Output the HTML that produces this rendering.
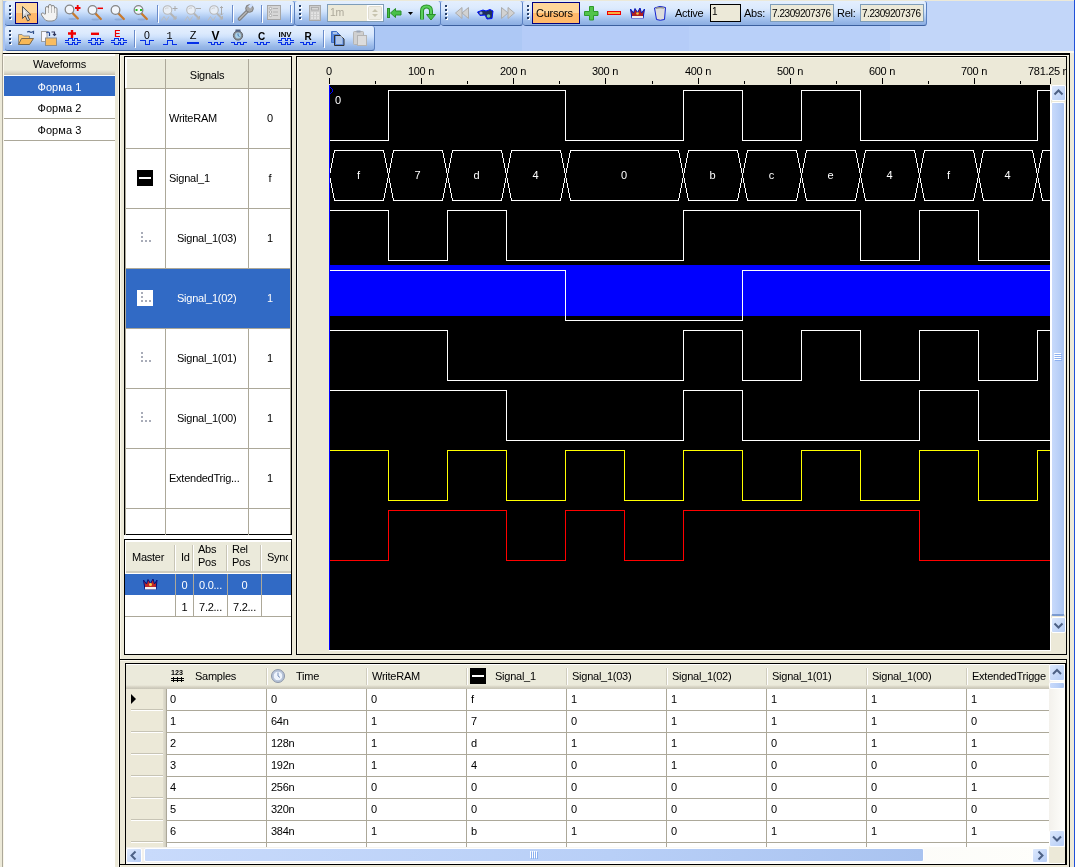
<!DOCTYPE html>
<html><head><meta charset="utf-8"><style>
html,body{margin:0;padding:0;}
body{width:1075px;height:867px;overflow:hidden;position:relative;background:#ECE9D8;font-family:"Liberation Sans",sans-serif;font-size:11px;}
div{position:absolute;box-sizing:border-box;}
.t{white-space:nowrap;line-height:13px;letter-spacing:-0.25px;}
.tb{border-radius:3px;background:linear-gradient(#E4EFFE 0%,#DCEAFD 30%,#CFE2FC 45%,#B2CDF3 65%,#98B8E8 85%,#8CAEE2 100%);border-bottom:1px solid #3B5F9E;border-right:1px solid #5A80C0;}
.selbtn{border:1px solid #000080;background:linear-gradient(#FFD699 0,#FFD699 10px,#FFB96A 10px,#FFB96A 100%);}
.sbtrack{background:linear-gradient(to right,#F3F1EC,#FEFEFB);}
.sbbtn{border-radius:2px;background:linear-gradient(135deg,#DCE8FC,#B6CDF6);border:1px solid #FFFFFF;}
.sbthumb{border-radius:2px;background:linear-gradient(to right,#C8DAFB,#B8CFF7 60%,#A9C3F0);border:1px solid #FFFFFF;}
</style></head><body><div style="left:0;top:0;width:1075px;height:867px;overflow:hidden;will-change:transform;background:#ECE9D8">
<div style="left:3px;top:1px;width:1071px;height:50px;background:linear-gradient(to right,#A6C2F2 0,#A6C2F2 351px,#ADC8F5 351px,#ADC8F5 519px,#B5CCF8 519px,#B5CCF8 686px,#B9D0F9 686px,#B9D0F9 887px,#C2D6F9 887px);"></div>
<div style="left:3px;top:51px;width:1071px;height:2px;background:#FBF8EC;"></div>
<div style="left:3px;top:53px;width:1067px;height:1px;background:#000;"></div>
<div style="left:119px;top:54px;width:951px;height:1px;background:#000;"></div>
<div style="left:1074px;top:0px;width:1px;height:867px;background:#2050D8;"></div>
<div class="tb" style="left:5px;top:1px;width:290px;height:25px"></div>
<div style="left:10px;top:6px;width:2px;height:2px;background:#FFFFFF;"></div>
<div style="left:9px;top:5px;width:2px;height:2px;background:#27416B;"></div>
<div style="left:10px;top:10px;width:2px;height:2px;background:#FFFFFF;"></div>
<div style="left:9px;top:9px;width:2px;height:2px;background:#27416B;"></div>
<div style="left:10px;top:14px;width:2px;height:2px;background:#FFFFFF;"></div>
<div style="left:9px;top:13px;width:2px;height:2px;background:#27416B;"></div>
<div style="left:10px;top:18px;width:2px;height:2px;background:#FFFFFF;"></div>
<div style="left:9px;top:17px;width:2px;height:2px;background:#27416B;"></div>
<div class="tb" style="left:295px;top:1px;width:146px;height:25px"></div>
<div style="left:300px;top:6px;width:2px;height:2px;background:#FFFFFF;"></div>
<div style="left:299px;top:5px;width:2px;height:2px;background:#27416B;"></div>
<div style="left:300px;top:10px;width:2px;height:2px;background:#FFFFFF;"></div>
<div style="left:299px;top:9px;width:2px;height:2px;background:#27416B;"></div>
<div style="left:300px;top:14px;width:2px;height:2px;background:#FFFFFF;"></div>
<div style="left:299px;top:13px;width:2px;height:2px;background:#27416B;"></div>
<div style="left:300px;top:18px;width:2px;height:2px;background:#FFFFFF;"></div>
<div style="left:299px;top:17px;width:2px;height:2px;background:#27416B;"></div>
<div class="tb" style="left:441px;top:1px;width:82px;height:25px"></div>
<div style="left:446px;top:6px;width:2px;height:2px;background:#FFFFFF;"></div>
<div style="left:445px;top:5px;width:2px;height:2px;background:#27416B;"></div>
<div style="left:446px;top:10px;width:2px;height:2px;background:#FFFFFF;"></div>
<div style="left:445px;top:9px;width:2px;height:2px;background:#27416B;"></div>
<div style="left:446px;top:14px;width:2px;height:2px;background:#FFFFFF;"></div>
<div style="left:445px;top:13px;width:2px;height:2px;background:#27416B;"></div>
<div style="left:446px;top:18px;width:2px;height:2px;background:#FFFFFF;"></div>
<div style="left:445px;top:17px;width:2px;height:2px;background:#27416B;"></div>
<div class="tb" style="left:523px;top:1px;width:404px;height:25px"></div>
<div style="left:528px;top:6px;width:2px;height:2px;background:#FFFFFF;"></div>
<div style="left:527px;top:5px;width:2px;height:2px;background:#27416B;"></div>
<div style="left:528px;top:10px;width:2px;height:2px;background:#FFFFFF;"></div>
<div style="left:527px;top:9px;width:2px;height:2px;background:#27416B;"></div>
<div style="left:528px;top:14px;width:2px;height:2px;background:#FFFFFF;"></div>
<div style="left:527px;top:13px;width:2px;height:2px;background:#27416B;"></div>
<div style="left:528px;top:18px;width:2px;height:2px;background:#FFFFFF;"></div>
<div style="left:527px;top:17px;width:2px;height:2px;background:#27416B;"></div>
<div class="tb" style="left:5px;top:26px;width:370px;height:25px"></div>
<div style="left:10px;top:31px;width:2px;height:2px;background:#FFFFFF;"></div>
<div style="left:9px;top:30px;width:2px;height:2px;background:#27416B;"></div>
<div style="left:10px;top:35px;width:2px;height:2px;background:#FFFFFF;"></div>
<div style="left:9px;top:34px;width:2px;height:2px;background:#27416B;"></div>
<div style="left:10px;top:39px;width:2px;height:2px;background:#FFFFFF;"></div>
<div style="left:9px;top:38px;width:2px;height:2px;background:#27416B;"></div>
<div style="left:10px;top:43px;width:2px;height:2px;background:#FFFFFF;"></div>
<div style="left:9px;top:42px;width:2px;height:2px;background:#27416B;"></div>
<div class="selbtn" style="left:15px;top:2px;width:23px;height:22px"></div>
<div class="selbtn" style="left:532px;top:2px;width:48px;height:22px"></div>
<div style="left:2px;top:0px;width:1px;height:53px;background:#D8D4C4;"></div>
<div class="t" style="left:536px;top:7px;color:#000;font-size:11px;">Cursors</div>
<div style="left:157px;top:5px;width:1px;height:17px;background:#6A8CCB;"></div>
<div style="left:158px;top:6px;width:1px;height:17px;background:#FFFFFF;"></div>
<div style="left:232px;top:5px;width:1px;height:17px;background:#6A8CCB;"></div>
<div style="left:233px;top:6px;width:1px;height:17px;background:#FFFFFF;"></div>
<div style="left:261px;top:5px;width:1px;height:17px;background:#6A8CCB;"></div>
<div style="left:262px;top:6px;width:1px;height:17px;background:#FFFFFF;"></div>
<div style="left:290px;top:5px;width:1px;height:17px;background:#6A8CCB;"></div>
<div style="left:291px;top:6px;width:1px;height:17px;background:#FFFFFF;"></div>
<div style="left:134px;top:30px;width:1px;height:17px;background:#6A8CCB;"></div>
<div style="left:135px;top:31px;width:1px;height:17px;background:#FFFFFF;"></div>
<div style="left:323px;top:30px;width:1px;height:17px;background:#6A8CCB;"></div>
<div style="left:324px;top:31px;width:1px;height:17px;background:#FFFFFF;"></div>
<div style="left:327px;top:4px;width:57px;height:18px;background:#7F9DB9;"></div>
<div style="left:328px;top:5px;width:55px;height:16px;background:#ECE9D8;"></div>
<div class="t" style="left:330px;top:6px;color:#ACA899;font-size:10.5px;">1m</div>
<div class="t" style="left:675px;top:7px;color:#000;font-size:11px;">Active</div>
<div style="left:710px;top:4px;width:31px;height:18px;background:#000;"></div>
<div style="left:711px;top:5px;width:29px;height:16px;background:#ECE9D8;"></div>
<div class="t" style="left:712px;top:5px;color:#000;font-size:10px;">1</div>
<div class="t" style="left:744px;top:7px;color:#000;font-size:11px;">Abs:</div>
<div style="left:770px;top:4px;width:64px;height:18px;background:#7F9DB9;"></div>
<div style="left:771px;top:5px;width:62px;height:16px;background:#ECE9D8;"></div>
<div class="t" style="left:772px;top:7px;color:#000;font-size:10px;letter-spacing:-0.45px">7.2309207376</div>
<div class="t" style="left:837px;top:7px;color:#000;font-size:11px;">Rel:</div>
<div style="left:860px;top:4px;width:64px;height:18px;background:#7F9DB9;"></div>
<div style="left:861px;top:5px;width:62px;height:16px;background:#ECE9D8;"></div>
<div class="t" style="left:862px;top:7px;color:#000;font-size:10px;letter-spacing:-0.45px">7.2309207376</div>
<svg style="position:absolute;left:0;top:0" width="1075" height="53" viewBox="0 0 1075 53"><path d="M22.5,6.5 L22.5,18.5 L25.2,15.8 L27.6,21 L29.6,20 L27.3,15 L31,14.8 Z" fill="#D4D4D4" stroke="#505050" stroke-width="1"/><path d="M23.5,9 L23.5,15 L26,12.5 Z" fill="#F4F4F4"/><path d="M45.5,14 L45.5,8 Q45.5,6.5 47,6.5 Q48.5,6.5 48.5,8 L48.5,6 Q48.5,4.5 50,4.5 Q51.5,4.5 51.5,6 L51.5,6.5 Q51.5,5.5 53,5.5 Q54.5,5.5 54.5,7 L54.5,8.5 Q54.5,7.5 55.7,7.5 Q57,7.5 57,9 L57,15.5 Q57,20.5 52,21 L48,21 Q45.5,21 44,18.5 L41.5,15 Q40.8,13.5 42,13 Q43.2,12.6 44.5,14 Z" fill="#F2F2F2" stroke="#8A8A8A" stroke-width="1"/><path d="M48.5,8 L48.5,13 M51.5,6.5 L51.5,13 M54.5,8.5 L54.5,13" stroke="#B0B0B0" stroke-width="0.8" fill="none"/><ellipse cx="72.5" cy="19.0" rx="4" ry="1" fill="#7F9CCB" opacity="0.6"/><line x1="72.5" y1="13.0" x2="77.8" y2="18.5" stroke="#C87A2E" stroke-width="2.3" stroke-linecap="round"/><circle cx="69.5" cy="9.5" r="4.3" fill="#F2F6FC" stroke="#858585" stroke-width="1.3"/><path d="M75,8 L80.5,8 M77.7,5 L77.7,11" stroke="#F00000" stroke-width="1.8"/><ellipse cx="95.5" cy="19.5" rx="4" ry="1" fill="#7F9CCB" opacity="0.6"/><line x1="95.5" y1="13.5" x2="100.8" y2="19" stroke="#C87A2E" stroke-width="2.3" stroke-linecap="round"/><circle cx="92.5" cy="10" r="4.3" fill="#F2F6FC" stroke="#858585" stroke-width="1.3"/><path d="M97.5,8.3 L103,8.3" stroke="#F00000" stroke-width="1.5"/><ellipse cx="118.5" cy="19.5" rx="4" ry="1" fill="#7F9CCB" opacity="0.6"/><line x1="118.5" y1="13.5" x2="123.8" y2="19" stroke="#C87A2E" stroke-width="2.3" stroke-linecap="round"/><circle cx="115.5" cy="10" r="4.3" fill="#F2F6FC" stroke="#858585" stroke-width="1.3"/><ellipse cx="141.5" cy="19.5" rx="4" ry="1" fill="#7F9CCB" opacity="0.6"/><line x1="141.5" y1="13.5" x2="146.8" y2="19" stroke="#C87A2E" stroke-width="2.3" stroke-linecap="round"/><circle cx="138.5" cy="10" r="4.3" fill="#F2F6FC" stroke="#858585" stroke-width="1.3"/><rect x="135.5" y="9" width="2" height="2" fill="#20C020"/><rect x="140" y="9" width="2" height="2" fill="#20C020"/><line x1="170.5" y1="13.5" x2="176.0" y2="19" stroke="#B4B4B4" stroke-width="2"/><path d="M173.0,19 L176.0,19 L176.0,16" fill="none" stroke="#B4B4B4" stroke-width="1"/><circle cx="167.5" cy="10" r="4.3" fill="#E8EEF6" stroke="#B8B8B8" stroke-width="1.1"/><path d="M165.0,9 Q166.5,7.5 168.5,8" stroke="#D0D0D0" stroke-width="1" fill="none"/><path d="M161.5,20.5 L164.0,16.5 L166.5,20.5 L169.0,16.5" fill="none" stroke="#BDBDBD" stroke-width="1"/><path d="M172.5,8.5 L177.5,8.5 M175.0,6 L175.0,11" stroke="#ABABAB" stroke-width="1"/><line x1="194" y1="13.5" x2="199.5" y2="19" stroke="#B4B4B4" stroke-width="2"/><path d="M196.5,19 L199.5,19 L199.5,16" fill="none" stroke="#B4B4B4" stroke-width="1"/><circle cx="191" cy="10" r="4.3" fill="#E8EEF6" stroke="#B8B8B8" stroke-width="1.1"/><path d="M188.5,9 Q190,7.5 192,8" stroke="#D0D0D0" stroke-width="1" fill="none"/><path d="M185,20.5 L187.5,16.5 L190,20.5 L192.5,16.5" fill="none" stroke="#BDBDBD" stroke-width="1"/><path d="M196,8.5 L201,8.5" stroke="#ABABAB" stroke-width="1"/><line x1="217" y1="13.5" x2="222.5" y2="19" stroke="#B4B4B4" stroke-width="2"/><path d="M219.5,19 L222.5,19 L222.5,16" fill="none" stroke="#B4B4B4" stroke-width="1"/><circle cx="214" cy="10" r="4.3" fill="#E8EEF6" stroke="#B8B8B8" stroke-width="1.1"/><path d="M211.5,9 Q213,7.5 215,8" stroke="#D0D0D0" stroke-width="1" fill="none"/><path d="M208,20.5 L210.5,16.5 L213,20.5 L215.5,16.5" fill="none" stroke="#BDBDBD" stroke-width="1"/><path d="M221.5,6.5 L221.5,15 M220,8 L221.5,6.5 L223,8 M220,13.5 L221.5,15 L223,13.5" stroke="#ABABAB" stroke-width="1" fill="none"/><line x1="239.5" y1="19" x2="247.5" y2="11" stroke="#7D7D7D" stroke-width="3.6" stroke-linecap="round"/><line x1="239.5" y1="19" x2="247.5" y2="11" stroke="#B4B4B4" stroke-width="1.6" stroke-linecap="round"/><circle cx="249.5" cy="8.5" r="3.8" fill="#A8A8A8" stroke="#7D7D7D" stroke-width="1"/><rect x="249" y="3.5" width="3" height="4.5" fill="#CFE0FC" transform="rotate(45 250.5 6)"/><rect x="267.5" y="5.5" width="13" height="14" fill="#D6D6D6" stroke="#A6A6A6"/><circle cx="270.5" cy="8.5" r="1.2" fill="#F4F4F4" stroke="#9A9A9A" stroke-width="0.7"/><line x1="273" y1="8.5" x2="278" y2="8.5" stroke="#A8A8A8" stroke-width="0.8"/><circle cx="270.5" cy="12" r="1.2" fill="#F4F4F4" stroke="#9A9A9A" stroke-width="0.7"/><line x1="273" y1="12" x2="278" y2="12" stroke="#A8A8A8" stroke-width="0.8"/><circle cx="270.5" cy="15.5" r="1.2" fill="#F4F4F4" stroke="#9A9A9A" stroke-width="0.7"/><line x1="273" y1="15.5" x2="278" y2="15.5" stroke="#A8A8A8" stroke-width="0.8"/><rect x="309.5" y="5.5" width="11" height="15" fill="#CCCCCC" stroke="#A8A8A8"/><rect x="311.5" y="7.5" width="7" height="2.5" fill="#D8D8D8" stroke="#A8A8A8" stroke-width="0.8"/><rect x="311.3" y="12.3" width="1.5" height="1.5" fill="#F0F0F0"/><rect x="314.3" y="12.3" width="1.5" height="1.5" fill="#F0F0F0"/><rect x="317.3" y="12.3" width="1.5" height="1.5" fill="#F0F0F0"/><rect x="311.3" y="14.8" width="1.5" height="1.5" fill="#F0F0F0"/><rect x="314.3" y="14.8" width="1.5" height="1.5" fill="#F0F0F0"/><rect x="317.3" y="14.8" width="1.5" height="1.5" fill="#F0F0F0"/><rect x="311.3" y="17.3" width="1.5" height="1.5" fill="#F0F0F0"/><rect x="314.3" y="17.3" width="1.5" height="1.5" fill="#F0F0F0"/><rect x="317.3" y="17.3" width="1.5" height="1.5" fill="#F0F0F0"/><rect x="387.5" y="8.5" width="2" height="9" fill="#48C048" stroke="#2A902A" stroke-width="1"/><path d="M390.5,13 L395.5,8.5 L395.5,11 L401,11 L401,15 L395.5,15 L395.5,17.5 Z" fill="#48C048" stroke="#2A902A" stroke-width="1"/><path d="M408,12 L413,12 L410.5,15 Z" fill="#000"/><path d="M422,19.5 L422,11 Q422,6.5 426.5,6.5 Q431,6.5 431,11 L431,15" fill="none" stroke="#2A902A" stroke-width="4"/><path d="M422,19.5 L422,11 Q422,6.5 426.5,6.5 Q431,6.5 431,11 L431,15" fill="none" stroke="#5AD05A" stroke-width="2"/><path d="M426.5,14.5 L435.5,14.5 L431,20 Z" fill="#48C048" stroke="#2A902A" stroke-width="1"/><path d="M455.5,13 L462,7.5 L462,18.5 Z M462,13 L468.5,7.5 L468.5,18.5 Z" fill="#D2D2D2" stroke="#ACACAC" stroke-width="1"/><path d="M514.5,13 L508,7.5 L508,18.5 Z M508,13 L501.5,7.5 L501.5,18.5 Z" fill="#D2D2D2" stroke="#ACACAC" stroke-width="1"/><path d="M477.5,12 L483,10 L486,11 L490,9.5 L493,11 L492,18.5 L487,19 L485,15 L480,15.5 Z" fill="#20305A" stroke="#0010FF" stroke-width="1"/><circle cx="481" cy="13" r="1.6" fill="#90A8D8"/><circle cx="488.5" cy="16" r="1.8" fill="#70C0A0"/><path d="M589.5,6.5 L593.5,6.5 L593.5,11.5 L598,11.5 L598,15.5 L593.5,15.5 L593.5,20 L589.5,20 L589.5,15.5 L584.5,15.5 L584.5,11.5 L589.5,11.5 Z" fill="#52C44A" stroke="#2E9A2A" stroke-width="1"/><rect x="607.5" y="11.5" width="13" height="3" fill="#F8B040" stroke="#F00000" stroke-width="1"/><path d="M630.5,9 L633.5,13 L635,8.5 L637.5,12.5 L640,8 L641.5,13 L644.5,9 L643,18.5 L632,18.5 Z" fill="#B02020" stroke="#0018C0" stroke-width="1"/><rect x="632" y="16" width="11" height="2.5" fill="#F0F0F0"/><circle cx="637.5" cy="13.5" r="1.3" fill="#F0C040"/><path d="M654.5,8 Q660,5 665.5,7.5 L664.5,19.5 Q660,21 656.5,19.5 Z" fill="#DCDCDC" stroke="#1020D0" stroke-width="1"/><path d="M656,8.3 Q660,7 664,8" stroke="#909090" stroke-width="1.5" fill="none"/><path d="M18.5,34.5 L22,34.5 L23.5,36 L29.5,36 L29.5,38.5 L33,38.5 L29.5,44.5 L18.5,44.5 Z" fill="#FCCB78" stroke="#8E8E8E" stroke-width="1"/><path d="M21.5,38.5 L33.5,38.5 L29.5,44.5 L18.5,44.5 Z" fill="#F8B858" stroke="#7A6A50" stroke-width="1"/><path d="M27,32 L29,31.5 L31,32.5 M31,32.5 L33.5,31.5 L33.5,34" stroke="#30508A" stroke-width="1.2" fill="none"/><rect x="41.5" y="31.5" width="5.5" height="10" fill="#F8F8FF" stroke="#A0A0A0" stroke-width="1"/><path d="M46.5,33 Q48,31 49.5,33 L49.5,36" stroke="#20408A" stroke-width="1.2" fill="none"/><path d="M51.5,32 L54.5,32 L54.5,35 M53,34 L54.5,35.5 L56,34" stroke="#303860" stroke-width="1.1" fill="none"/><rect x="45.5" y="38" width="11" height="7.5" fill="#F8BC60" stroke="#8E8E8E" stroke-width="1"/><path d="M64.5,40.5 L68.5,40.5 L68.5,38.5 L72.5,38.5 L72.5,40.5 L74.5,40.5 L74.5,38.5 L77.5,38.5 L77.5,40.5 L80.5,40.5 M64.5,42.5 L68.5,42.5 L68.5,44.5 L72.5,44.5 L72.5,42.5 L74.5,42.5 L74.5,44.5 L77.5,44.5 L77.5,42.5 L80.5,42.5" fill="none" stroke="#0530E8" stroke-width="1" shape-rendering="crispEdges"/><path d="M87.5,40.5 L91.5,40.5 L91.5,38.5 L95.5,38.5 L95.5,40.5 L97.5,40.5 L97.5,38.5 L100.5,38.5 L100.5,40.5 L103.5,40.5 M87.5,42.5 L91.5,42.5 L91.5,44.5 L95.5,44.5 L95.5,42.5 L97.5,42.5 L97.5,44.5 L100.5,44.5 L100.5,42.5 L103.5,42.5" fill="none" stroke="#0530E8" stroke-width="1" shape-rendering="crispEdges"/><path d="M110.5,40.5 L114.5,40.5 L114.5,38.5 L118.5,38.5 L118.5,40.5 L120.5,40.5 L120.5,38.5 L123.5,38.5 L123.5,40.5 L126.5,40.5 M110.5,42.5 L114.5,42.5 L114.5,44.5 L118.5,44.5 L118.5,42.5 L120.5,42.5 L120.5,44.5 L123.5,44.5 L123.5,42.5 L126.5,42.5" fill="none" stroke="#0530E8" stroke-width="1" shape-rendering="crispEdges"/><path d="M68,33.5 L76,33.5 M72,30 L72,38" stroke="#F00000" stroke-width="2.4"/><path d="M91,33.8 L99,33.8" stroke="#F00000" stroke-width="2.4"/><path d="M120,30.5 L115.5,30.5 L115.5,36.5 L120,36.5 M115.5,33.5 L119.5,33.5" stroke="#F00000" stroke-width="1.2" fill="none"/><path d="M140,40.5 L145,40.5 L145,44.5 L149,44.5 L149,40.5 L154,40.5" fill="none" stroke="#0530E8" shape-rendering="crispEdges"/><path d="M163,44.5 L167,44.5 L167,40.5 L172,40.5 L172,44.5 L177,44.5" fill="none" stroke="#0530E8" shape-rendering="crispEdges"/><rect x="187" y="42" width="12" height="2" fill="#0530E8"/><path d="M208,42.5 L211,42.5 L211,44.5 L214,44.5 L214,42.5 L217,42.5 L217,44.5 L220,44.5 L220,42.5 L224,42.5" fill="none" stroke="#0530E8" stroke-width="1" shape-rendering="crispEdges"/><path d="M231,42.5 L234,42.5 L234,44.5 L237,44.5 L237,42.5 L240,42.5 L240,44.5 L243,44.5 L243,42.5 L247,42.5" fill="none" stroke="#0530E8" stroke-width="1" shape-rendering="crispEdges"/><path d="M254,42.5 L257,42.5 L257,44.5 L260,44.5 L260,42.5 L263,42.5 L263,44.5 L266,44.5 L266,42.5 L270,42.5" fill="none" stroke="#0530E8" stroke-width="1" shape-rendering="crispEdges"/><path d="M300,42.5 L303,42.5 L303,44.5 L306,44.5 L306,42.5 L309,42.5 L309,44.5 L312,44.5 L312,42.5 L316,42.5" fill="none" stroke="#0530E8" stroke-width="1" shape-rendering="crispEdges"/><path d="M277.5,40.5 L281.5,40.5 L281.5,38.5 L285.5,38.5 L285.5,40.5 L287.5,40.5 L287.5,38.5 L290.5,38.5 L290.5,40.5 L293.5,40.5 M277.5,42.5 L281.5,42.5 L281.5,44.5 L285.5,44.5 L285.5,42.5 L287.5,42.5 L287.5,44.5 L290.5,44.5 L290.5,42.5 L293.5,42.5" fill="none" stroke="#0530E8" stroke-width="1" shape-rendering="crispEdges"/><text x="147" y="38.5" font-size="10.5" font-family="Liberation Sans" text-anchor="middle" fill="#000">0</text><text x="169.5" y="38.5" font-size="10" font-family="Liberation Mono" text-anchor="middle" fill="#000">1</text><text x="193" y="39" font-size="11" font-family="Liberation Sans" text-anchor="middle" fill="#000">Z</text><text x="215.5" y="39.5" font-size="12" font-weight="bold" font-family="Liberation Sans" text-anchor="middle" fill="#000">V</text><circle cx="238" cy="35.5" r="4.6" fill="#8A9098" stroke="#5A6068"/><circle cx="238" cy="35.5" r="2.9" fill="#A8D0E8"/><path d="M238,33.5 L238,35.5 L239.5,36.5" stroke="#3060A0" stroke-width="0.8" fill="none"/><rect x="235.5" y="29.5" width="5" height="2" fill="#506080"/><text x="261.5" y="39.5" font-size="10" font-weight="bold" font-family="Liberation Sans" text-anchor="middle" fill="#000">C</text><text x="285" y="37.3" font-size="8" font-weight="bold" font-family="Liberation Sans" text-anchor="middle" fill="#000" textLength="13" lengthAdjust="spacingAndGlyphs">INV</text><text x="308" y="39.5" font-size="10" font-weight="bold" font-family="Liberation Sans" text-anchor="middle" fill="#000">R</text><path d="M331.5,31.5 L336.5,31.5 L340,35 L340,42.5 L331.5,42.5 Z" fill="#5A8AE0" stroke="#4070C8" stroke-width="1"/><path d="M334.5,35.5 L340.5,35.5 L344,39 L344,45.5 L334.5,45.5 Z" fill="#5A8AE0" stroke="#303030" stroke-width="1"/><line x1="333" y1="33" x2="337" y2="33" stroke="#FFFFF0" stroke-width="1"/><line x1="336" y1="37" x2="342.5" y2="37" stroke="#FFFFF0" stroke-width="1"/><line x1="336" y1="39" x2="342.5" y2="39" stroke="#FFFFF0" stroke-width="1"/><line x1="336" y1="41" x2="342.5" y2="41" stroke="#FFFFF0" stroke-width="1"/><line x1="336" y1="43" x2="342.5" y2="43" stroke="#FFFFF0" stroke-width="1"/><rect x="353.5" y="31.5" width="10" height="13" rx="1" fill="#D0D0D0" stroke="#B4B4B4"/><rect x="356.5" y="30.5" width="4" height="2" fill="#9AA4B4"/><rect x="357.5" y="35.5" width="9" height="10" fill="#DCDCDC" stroke="#B4B4B4"/></svg>
<svg style="position:absolute;left:367px;top:5px" width="16" height="16"><rect x="0" y="0" width="16" height="16" fill="#FFFFFF"/><rect x="1.5" y="1.5" width="13" height="13" rx="1" fill="#EFEDE4" stroke="#E0DDD0"/><path d="M5,7 L8,4 L11,7 Z M5,9 L8,12 L11,9 Z" fill="#C8C4B0"/></svg>
<div style="left:2px;top:53px;width:1px;height:814px;background:#ACA899;"></div>
<div style="left:3px;top:54px;width:1px;height:813px;background:#FBF8EC;"></div>
<div style="left:4px;top:54px;width:111px;height:813px;background:#FFFFFF;"></div>
<div style="left:115px;top:54px;width:4px;height:813px;background:#ECE9D8;"></div>
<div style="left:118px;top:54px;width:1px;height:813px;background:#FBF8EC;"></div>
<div style="left:119px;top:53px;width:1px;height:814px;background:#000;"></div>
<div style="left:4px;top:55px;width:111px;height:20px;background:linear-gradient(#FFFFFF 0,#FFFFFF 1px,#EBEADB 1px,#EBEADB 15px,#D8D5C6 18px,#C4C1B2 20px);"></div>
<div class="t" style="left:4px;top:58px;color:#000;font-size:11px;width:111px;text-align:center;">Waveforms</div>
<div style="left:4px;top:76px;width:111px;height:20px;background:#316AC5;"></div>
<div class="t" style="left:4px;top:81px;color:#FFF;font-size:11px;width:111px;text-align:center;letter-spacing:0.1px">Форма 1</div>
<div class="t" style="left:4px;top:102px;color:#000;font-size:11px;width:111px;text-align:center;letter-spacing:0.1px">Форма 2</div>
<div style="left:4px;top:118px;width:111px;height:1px;background:#ACA899;"></div>
<div class="t" style="left:4px;top:124px;color:#000;font-size:11px;width:111px;text-align:center;letter-spacing:0.1px">Форма 3</div>
<div style="left:4px;top:140px;width:111px;height:1px;background:#ACA899;"></div>
<div style="left:120px;top:55px;width:949px;height:812px;background:#ECE9D8;"></div>
<div style="left:120px;top:55px;width:949px;height:1px;background:#FBF8EC;"></div>
<div style="left:120px;top:55px;width:1px;height:812px;background:#FBF8EC;"></div>
<div style="left:1069px;top:53px;width:1px;height:814px;background:#000;"></div>
<div style="left:124px;top:56px;width:168px;height:479px;background:#000;"></div>
<div style="left:125px;top:57px;width:166px;height:477px;background:#FFFFFF;"></div>
<div style="left:127px;top:59px;width:164px;height:29px;background:#EBEADB;"></div>
<div style="left:125px;top:88px;width:166px;height:1px;background:#ACA899;"></div>
<div style="left:165px;top:59px;width:1px;height:476px;background:#ACA899;"></div>
<div style="left:248px;top:59px;width:1px;height:476px;background:#ACA899;"></div>
<div class="t" style="left:166px;top:69px;color:#000;font-size:11px;width:82px;text-align:center;">Signals</div>
<div class="t" style="left:169px;top:112px;color:#000;font-size:11px;">WriteRAM</div>
<div class="t" style="left:249px;top:112px;color:#000;font-size:11px;width:42px;text-align:center;">0</div>
<div style="left:125px;top:148px;width:166px;height:1px;background:#ACA899;"></div>
<div class="t" style="left:169px;top:172px;color:#000;font-size:11px;">Signal_1</div>
<div class="t" style="left:249px;top:172px;color:#000;font-size:11px;width:42px;text-align:center;">f</div>
<div style="left:125px;top:208px;width:166px;height:1px;background:#ACA899;"></div>
<div style="left:137px;top:170px;width:16px;height:16px;background:#000;"></div>
<div style="left:139px;top:177px;width:12px;height:2px;background:#FFF;"></div>
<div class="t" style="left:177px;top:232px;color:#000;font-size:11px;">Signal_1(03)</div>
<div class="t" style="left:249px;top:232px;color:#000;font-size:11px;width:42px;text-align:center;">1</div>
<div style="left:125px;top:268px;width:166px;height:1px;background:#ACA899;"></div>
<div style="left:141px;top:232px;width:2px;height:2px;background:#A8ACB8;"></div>
<div style="left:141px;top:236px;width:2px;height:2px;background:#A8ACB8;"></div>
<div style="left:141px;top:240px;width:2px;height:2px;background:#A8ACB8;"></div>
<div style="left:145px;top:240px;width:2px;height:2px;background:#A8ACB8;"></div>
<div style="left:149px;top:240px;width:2px;height:2px;background:#A8ACB8;"></div>
<div style="left:125px;top:269px;width:166px;height:59px;background:#316AC5;"></div>
<div class="t" style="left:177px;top:292px;color:#FFF;font-size:11px;">Signal_1(02)</div>
<div class="t" style="left:249px;top:292px;color:#FFF;font-size:11px;width:42px;text-align:center;">1</div>
<div style="left:125px;top:328px;width:166px;height:1px;background:#ACA899;"></div>
<div style="left:137px;top:290px;width:16px;height:16px;background:#FFF;"></div>
<div style="left:141px;top:292px;width:2px;height:2px;background:#A8ACB8;"></div>
<div style="left:141px;top:296px;width:2px;height:2px;background:#A8ACB8;"></div>
<div style="left:141px;top:300px;width:2px;height:2px;background:#A8ACB8;"></div>
<div style="left:145px;top:300px;width:2px;height:2px;background:#A8ACB8;"></div>
<div style="left:149px;top:300px;width:2px;height:2px;background:#A8ACB8;"></div>
<div class="t" style="left:177px;top:352px;color:#000;font-size:11px;">Signal_1(01)</div>
<div class="t" style="left:249px;top:352px;color:#000;font-size:11px;width:42px;text-align:center;">1</div>
<div style="left:125px;top:388px;width:166px;height:1px;background:#ACA899;"></div>
<div style="left:141px;top:352px;width:2px;height:2px;background:#A8ACB8;"></div>
<div style="left:141px;top:356px;width:2px;height:2px;background:#A8ACB8;"></div>
<div style="left:141px;top:360px;width:2px;height:2px;background:#A8ACB8;"></div>
<div style="left:145px;top:360px;width:2px;height:2px;background:#A8ACB8;"></div>
<div style="left:149px;top:360px;width:2px;height:2px;background:#A8ACB8;"></div>
<div class="t" style="left:177px;top:412px;color:#000;font-size:11px;">Signal_1(00)</div>
<div class="t" style="left:249px;top:412px;color:#000;font-size:11px;width:42px;text-align:center;">1</div>
<div style="left:125px;top:448px;width:166px;height:1px;background:#ACA899;"></div>
<div style="left:141px;top:412px;width:2px;height:2px;background:#A8ACB8;"></div>
<div style="left:141px;top:416px;width:2px;height:2px;background:#A8ACB8;"></div>
<div style="left:141px;top:420px;width:2px;height:2px;background:#A8ACB8;"></div>
<div style="left:145px;top:420px;width:2px;height:2px;background:#A8ACB8;"></div>
<div style="left:149px;top:420px;width:2px;height:2px;background:#A8ACB8;"></div>
<div class="t" style="left:169px;top:472px;color:#000;font-size:11px;">ExtendedTrig...</div>
<div class="t" style="left:249px;top:472px;color:#000;font-size:11px;width:42px;text-align:center;">1</div>
<div style="left:125px;top:508px;width:166px;height:1px;background:#ACA899;"></div>
<div style="left:125px;top:89px;width:1px;height:446px;background:#ACA899;"></div>
<div style="left:290px;top:89px;width:1px;height:445px;background:#ACA899;"></div>
<div style="left:166px;top:89px;width:0px;height:0px;background:#000;"></div>
<div style="left:124px;top:535px;width:168px;height:4px;background:#FFFFFF;"></div>
<div style="left:124px;top:539px;width:168px;height:116px;background:#000;"></div>
<div style="left:125px;top:540px;width:166px;height:114px;background:#FFFFFF;"></div>
<div style="left:126px;top:542px;width:165px;height:31px;background:#EBEADB;"></div>
<div style="left:126px;top:571px;width:165px;height:2px;background:#D0CDBE;"></div>
<div style="left:174px;top:545px;width:1px;height:26px;background:#C8C5B6;"></div>
<div style="left:175px;top:545px;width:1px;height:26px;background:#FFFFFF;"></div>
<div style="left:192px;top:545px;width:1px;height:26px;background:#C8C5B6;"></div>
<div style="left:193px;top:545px;width:1px;height:26px;background:#FFFFFF;"></div>
<div style="left:226px;top:545px;width:1px;height:26px;background:#C8C5B6;"></div>
<div style="left:227px;top:545px;width:1px;height:26px;background:#FFFFFF;"></div>
<div style="left:260px;top:545px;width:1px;height:26px;background:#C8C5B6;"></div>
<div style="left:261px;top:545px;width:1px;height:26px;background:#FFFFFF;"></div>
<div class="t" style="left:132px;top:551px;color:#000;font-size:11px;">Master</div>
<div class="t" style="left:181px;top:551px;color:#000;font-size:11px;">Id</div>
<div class="t" style="left:198px;top:543px;color:#000;font-size:11px;line-height:13px">Abs<br>Pos</div>
<div class="t" style="left:232px;top:543px;color:#000;font-size:11px;line-height:13px">Rel<br>Pos</div>
<div class="t" style="left:267px;top:551px;color:#000;font-size:11px;width:21px;overflow:hidden">Sync</div>
<div style="left:125px;top:574px;width:166px;height:21px;background:#316AC5;"></div>
<div style="left:175px;top:574px;width:1px;height:43px;background:#ACA899;"></div>
<div style="left:193px;top:574px;width:1px;height:43px;background:#ACA899;"></div>
<div style="left:227px;top:574px;width:1px;height:43px;background:#ACA899;"></div>
<div style="left:261px;top:574px;width:1px;height:43px;background:#ACA899;"></div>
<div style="left:125px;top:616px;width:166px;height:1px;background:#ACA899;"></div>
<div class="t" style="left:176px;top:579px;color:#FFF;font-size:11px;width:17px;text-align:center;">0</div>
<svg style="position:absolute;left:142px;top:577px" width="16" height="14"><path d="M1.5,3 L4.5,7 L6,2.5 L8.5,6.5 L11,2 L12.5,7 L15,3 L14,12.5 L3,12.5 Z" fill="#C02828" stroke="#001080" stroke-width="1"/><rect x="3" y="10" width="11" height="2.5" fill="#F4F4F4"/><circle cx="8.5" cy="7.5" r="1.5" fill="#F8D048"/></svg>
<div class="t" style="left:194px;top:579px;color:#FFF;font-size:11px;width:33px;text-align:center;">0.0...</div>
<div class="t" style="left:228px;top:579px;color:#FFF;font-size:11px;width:33px;text-align:center;">0</div>
<div class="t" style="left:176px;top:601px;color:#000;font-size:11px;width:17px;text-align:center;">1</div>
<div class="t" style="left:194px;top:601px;color:#000;font-size:11px;width:33px;text-align:center;">7.2...</div>
<div class="t" style="left:228px;top:601px;color:#000;font-size:11px;width:33px;text-align:center;">7.2...</div>
<div style="left:296px;top:56px;width:771px;height:599px;background:#000;"></div>
<div style="left:297px;top:57px;width:769px;height:597px;background:#ECE9D8;"></div>
<div style="left:297px;top:57px;width:769px;height:1px;background:#FBF8EC;"></div>
<div style="left:297px;top:57px;width:1px;height:597px;background:#FBF8EC;"></div>
<div class="t" style="left:289px;top:65px;color:#000;font-size:11px;width:80px;text-align:center;letter-spacing:-0.3px">0</div>
<div class="t" style="left:381px;top:65px;color:#000;font-size:11px;width:80px;text-align:center;letter-spacing:-0.3px">100 n</div>
<div class="t" style="left:473px;top:65px;color:#000;font-size:11px;width:80px;text-align:center;letter-spacing:-0.3px">200 n</div>
<div class="t" style="left:565px;top:65px;color:#000;font-size:11px;width:80px;text-align:center;letter-spacing:-0.3px">300 n</div>
<div class="t" style="left:658px;top:65px;color:#000;font-size:11px;width:80px;text-align:center;letter-spacing:-0.3px">400 n</div>
<div class="t" style="left:750px;top:65px;color:#000;font-size:11px;width:80px;text-align:center;letter-spacing:-0.3px">500 n</div>
<div class="t" style="left:842px;top:65px;color:#000;font-size:11px;width:80px;text-align:center;letter-spacing:-0.3px">600 n</div>
<div class="t" style="left:934px;top:65px;color:#000;font-size:11px;width:80px;text-align:center;letter-spacing:-0.3px">700 n</div>
<div class="t" style="left:1028px;top:65px;color:#000;font-size:11px;width:38px;overflow:hidden;white-space:nowrap;letter-spacing:-0.3px">781.25 n</div>
<div style="left:329px;top:78px;width:1px;height:6px;background:#000;"></div>
<div style="left:375px;top:81px;width:1px;height:3px;background:#000;"></div>
<div style="left:421px;top:78px;width:1px;height:6px;background:#000;"></div>
<div style="left:467px;top:81px;width:1px;height:3px;background:#000;"></div>
<div style="left:513px;top:78px;width:1px;height:6px;background:#000;"></div>
<div style="left:559px;top:81px;width:1px;height:3px;background:#000;"></div>
<div style="left:605px;top:78px;width:1px;height:6px;background:#000;"></div>
<div style="left:652px;top:81px;width:1px;height:3px;background:#000;"></div>
<div style="left:698px;top:78px;width:1px;height:6px;background:#000;"></div>
<div style="left:744px;top:81px;width:1px;height:3px;background:#000;"></div>
<div style="left:790px;top:78px;width:1px;height:6px;background:#000;"></div>
<div style="left:836px;top:81px;width:1px;height:3px;background:#000;"></div>
<div style="left:882px;top:78px;width:1px;height:6px;background:#000;"></div>
<div style="left:928px;top:81px;width:1px;height:3px;background:#000;"></div>
<div style="left:974px;top:78px;width:1px;height:6px;background:#000;"></div>
<div style="left:1020px;top:81px;width:1px;height:3px;background:#000;"></div>
<div style="left:1050px;top:78px;width:1px;height:6px;background:#000;"></div>
<svg width="722" height="566" viewBox="329 85 722 566" style="position:absolute;left:329px;top:85px" shape-rendering="crispEdges"><rect x="329" y="85" width="721" height="565" fill="#000"/><rect x="329" y="265" width="721" height="51" fill="#0000FF"/><polyline fill="none" stroke="#FFF" stroke-width="1" points="329.5,140.5 388.5,140.5 388.5,90.5 565.5,90.5 565.5,140.5 683.5,140.5 683.5,90.5 742.5,90.5 742.5,140.5 801.5,140.5 801.5,90.5 860.5,90.5 860.5,140.5 1037.5,140.5 1037.5,90.5 1051,90.5"/><polyline fill="none" stroke="#FFF" stroke-width="1" points="329.5,210.5 388.5,210.5 388.5,260.5 447.5,260.5 447.5,210.5 506.5,210.5 506.5,260.5 683.5,260.5 683.5,210.5 860.5,210.5 860.5,260.5 919.5,260.5 919.5,210.5 978.5,210.5 978.5,260.5 1051,260.5"/><polyline fill="none" stroke="#FFF" stroke-width="1" points="329.5,270.5 565.5,270.5 565.5,320.5 742.5,320.5 742.5,270.5 1051,270.5"/><polyline fill="none" stroke="#FFF" stroke-width="1" points="329.5,330.5 447.5,330.5 447.5,380.5 683.5,380.5 683.5,330.5 742.5,330.5 742.5,380.5 801.5,380.5 801.5,330.5 860.5,330.5 860.5,380.5 919.5,380.5 919.5,330.5 978.5,330.5 978.5,380.5 1037.5,380.5 1037.5,330.5 1051,330.5"/><polyline fill="none" stroke="#FFF" stroke-width="1" points="329.5,390.5 506.5,390.5 506.5,440.5 683.5,440.5 683.5,390.5 742.5,390.5 742.5,440.5 919.5,440.5 919.5,390.5 978.5,390.5 978.5,440.5 1051,440.5"/><polyline fill="none" stroke="#FFFF00" stroke-width="1" points="329.5,450.5 388.5,450.5 388.5,500.5 447.5,500.5 447.5,450.5 506.5,450.5 506.5,500.5 565.5,500.5 565.5,450.5 624.5,450.5 624.5,500.5 683.5,500.5 683.5,450.5 742.5,450.5 742.5,500.5 801.5,500.5 801.5,450.5 860.5,450.5 860.5,500.5 919.5,500.5 919.5,450.5 978.5,450.5 978.5,500.5 1037.5,500.5 1037.5,450.5 1051,450.5"/><polyline fill="none" stroke="#FF0000" stroke-width="1" points="329.5,560.5 388.5,560.5 388.5,510.5 506.5,510.5 506.5,560.5 565.5,560.5 565.5,510.5 624.5,510.5 624.5,560.5 683.5,560.5 683.5,510.5 919.5,510.5 919.5,560.5 1051,560.5"/><path d="M334.5,150.5 L383.5,150.5 L388.5,175.5 L383.5,200.5 L334.5,200.5 L329.5,175.5 Z" fill="none" stroke="#FFF" stroke-width="1"/><text x="358.5" y="179" fill="#FFF" font-size="11" text-anchor="middle" font-family="Liberation Sans">f</text><path d="M393.5,150.5 L442.5,150.5 L447.5,175.5 L442.5,200.5 L393.5,200.5 L388.5,175.5 Z" fill="none" stroke="#FFF" stroke-width="1"/><text x="417.5" y="179" fill="#FFF" font-size="11" text-anchor="middle" font-family="Liberation Sans">7</text><path d="M452.5,150.5 L501.5,150.5 L506.5,175.5 L501.5,200.5 L452.5,200.5 L447.5,175.5 Z" fill="none" stroke="#FFF" stroke-width="1"/><text x="476.5" y="179" fill="#FFF" font-size="11" text-anchor="middle" font-family="Liberation Sans">d</text><path d="M511.5,150.5 L560.5,150.5 L565.5,175.5 L560.5,200.5 L511.5,200.5 L506.5,175.5 Z" fill="none" stroke="#FFF" stroke-width="1"/><text x="535.5" y="179" fill="#FFF" font-size="11" text-anchor="middle" font-family="Liberation Sans">4</text><path d="M570.5,150.5 L678.5,150.5 L683.5,175.5 L678.5,200.5 L570.5,200.5 L565.5,175.5 Z" fill="none" stroke="#FFF" stroke-width="1"/><text x="624.0" y="179" fill="#FFF" font-size="11" text-anchor="middle" font-family="Liberation Sans">0</text><path d="M688.5,150.5 L737.5,150.5 L742.5,175.5 L737.5,200.5 L688.5,200.5 L683.5,175.5 Z" fill="none" stroke="#FFF" stroke-width="1"/><text x="712.5" y="179" fill="#FFF" font-size="11" text-anchor="middle" font-family="Liberation Sans">b</text><path d="M747.5,150.5 L796.5,150.5 L801.5,175.5 L796.5,200.5 L747.5,200.5 L742.5,175.5 Z" fill="none" stroke="#FFF" stroke-width="1"/><text x="771.5" y="179" fill="#FFF" font-size="11" text-anchor="middle" font-family="Liberation Sans">c</text><path d="M806.5,150.5 L855.5,150.5 L860.5,175.5 L855.5,200.5 L806.5,200.5 L801.5,175.5 Z" fill="none" stroke="#FFF" stroke-width="1"/><text x="830.5" y="179" fill="#FFF" font-size="11" text-anchor="middle" font-family="Liberation Sans">e</text><path d="M865.5,150.5 L914.5,150.5 L919.5,175.5 L914.5,200.5 L865.5,200.5 L860.5,175.5 Z" fill="none" stroke="#FFF" stroke-width="1"/><text x="889.5" y="179" fill="#FFF" font-size="11" text-anchor="middle" font-family="Liberation Sans">4</text><path d="M924.5,150.5 L973.5,150.5 L978.5,175.5 L973.5,200.5 L924.5,200.5 L919.5,175.5 Z" fill="none" stroke="#FFF" stroke-width="1"/><text x="948.5" y="179" fill="#FFF" font-size="11" text-anchor="middle" font-family="Liberation Sans">f</text><path d="M983.5,150.5 L1032.5,150.5 L1037.5,175.5 L1032.5,200.5 L983.5,200.5 L978.5,175.5 Z" fill="none" stroke="#FFF" stroke-width="1"/><text x="1007.5" y="179" fill="#FFF" font-size="11" text-anchor="middle" font-family="Liberation Sans">4</text><path d="M1042.5,150.5 L1091.5,150.5 L1096.5,175.5 L1091.5,200.5 L1042.5,200.5 L1037.5,175.5 Z" fill="none" stroke="#FFF" stroke-width="1"/><text x="335" y="104" fill="#FFF" font-size="11" font-family="Liberation Sans">0</text><line x1="329.5" y1="85" x2="329.5" y2="650" stroke="#0000FF"/><rect x="330" y="87" width="1" height="1" fill="#0000FF"/><rect x="331" y="88" width="1" height="1" fill="#0000FF"/><rect x="332" y="89" width="1" height="1" fill="#0000FF"/><rect x="332" y="90" width="1" height="1" fill="#0000FF"/><rect x="332" y="91" width="1" height="1" fill="#0000FF"/><rect x="331" y="92" width="1" height="1" fill="#0000FF"/><rect x="330" y="93" width="1" height="1" fill="#0000FF"/></svg>
<div style="left:1050px;top:85px;width:1px;height:566px;background:#FFFFFF;"></div>
<div style="left:329px;top:650px;width:722px;height:1px;background:#FFFFFF;"></div>
<div class="sbtrack" style="left:1051px;top:85px;width:15px;height:565px;background:#ECE9D8"></div>
<div class="sbbtn" style="left:1051px;top:85px;width:15px;height:16px"></div>
<svg style="position:absolute;left:1051px;top:85px" width="15" height="16"><path d="M3.5,9.5 L7.5,5.5 L11.5,9.5" stroke="#4D6185" stroke-width="2" fill="none"/></svg>
<div class="sbthumb" style="left:1051px;top:102px;width:14px;height:514px;border-bottom:2px solid #7A9AD0"></div>
<div class="sbbtn" style="left:1051px;top:617px;width:15px;height:16px"></div>
<svg style="position:absolute;left:1051px;top:617px" width="15" height="16"><path d="M3.5,6.5 L7.5,10.5 L11.5,6.5" stroke="#4D6185" stroke-width="2" fill="none"/></svg>
<svg style="position:absolute;left:1053px;top:352px" width="10" height="10"><path d="M1,1.5 L8,1.5 M1,3.5 L8,3.5 M1,5.5 L8,5.5 M1,7.5 L8,7.5" stroke="#FFFFFF" stroke-width="1"/><path d="M2,2.5 L9,2.5 M2,4.5 L9,4.5 M2,6.5 L9,6.5 M2,8.5 L9,8.5" stroke="#8CB0F0" stroke-width="1"/></svg>
<div style="left:296px;top:654px;width:771px;height:1px;background:#000;"></div>
<div style="left:1066px;top:56px;width:1px;height:599px;background:#000;"></div>
<div style="left:119px;top:659px;width:948px;height:206px;background:#000;"></div>
<div style="left:120px;top:660px;width:946px;height:204px;background:#ECE9D8;"></div>
<div style="left:120px;top:660px;width:946px;height:1px;background:#FBF8EC;"></div>
<div style="left:125px;top:663px;width:941px;height:201px;background:#000;"></div>
<div style="left:126px;top:664px;width:939px;height:199px;background:#FFFFFF;"></div>
<div style="left:126px;top:664px;width:924px;height:25px;background:linear-gradient(#FFFFFF 0,#FFFFFF 1px,#EBEADB 1px,#EBEADB 21px,#D6D3C4 23px,#C7C4B5 25px);"></div>
<div style="left:126px;top:689px;width:40px;height:158px;background:#ECE9D8;"></div>
<div style="left:266px;top:668px;width:1px;height:17px;background:#D0CDBE;"></div>
<div style="left:267px;top:668px;width:1px;height:17px;background:#FFFFFF;"></div>
<div style="left:366px;top:668px;width:1px;height:17px;background:#D0CDBE;"></div>
<div style="left:367px;top:668px;width:1px;height:17px;background:#FFFFFF;"></div>
<div style="left:466px;top:668px;width:1px;height:17px;background:#D0CDBE;"></div>
<div style="left:467px;top:668px;width:1px;height:17px;background:#FFFFFF;"></div>
<div style="left:566px;top:668px;width:1px;height:17px;background:#D0CDBE;"></div>
<div style="left:567px;top:668px;width:1px;height:17px;background:#FFFFFF;"></div>
<div style="left:666px;top:668px;width:1px;height:17px;background:#D0CDBE;"></div>
<div style="left:667px;top:668px;width:1px;height:17px;background:#FFFFFF;"></div>
<div style="left:766px;top:668px;width:1px;height:17px;background:#D0CDBE;"></div>
<div style="left:767px;top:668px;width:1px;height:17px;background:#FFFFFF;"></div>
<div style="left:866px;top:668px;width:1px;height:17px;background:#D0CDBE;"></div>
<div style="left:867px;top:668px;width:1px;height:17px;background:#FFFFFF;"></div>
<div style="left:966px;top:668px;width:1px;height:17px;background:#D0CDBE;"></div>
<div style="left:967px;top:668px;width:1px;height:17px;background:#FFFFFF;"></div>
<div class="t" style="left:195px;top:670px;color:#000;font-size:11px;white-space:nowrap">Samples</div>
<div class="t" style="left:296px;top:670px;color:#000;font-size:11px;white-space:nowrap">Time</div>
<div class="t" style="left:372px;top:670px;color:#000;font-size:11px;white-space:nowrap">WriteRAM</div>
<div class="t" style="left:495px;top:670px;color:#000;font-size:11px;white-space:nowrap">Signal_1</div>
<div class="t" style="left:572px;top:670px;color:#000;font-size:11px;white-space:nowrap">Signal_1(03)</div>
<div class="t" style="left:672px;top:670px;color:#000;font-size:11px;white-space:nowrap">Signal_1(02)</div>
<div class="t" style="left:772px;top:670px;color:#000;font-size:11px;white-space:nowrap">Signal_1(01)</div>
<div class="t" style="left:872px;top:670px;color:#000;font-size:11px;white-space:nowrap">Signal_1(00)</div>
<div class="t" style="left:972px;top:670px;color:#000;font-size:11px;white-space:nowrap">ExtendedTrigge</div>
<svg style="position:absolute;left:170px;top:668px" width="16" height="16"><text x="1" y="7" font-size="6.5" font-family="Liberation Sans" font-weight="bold" fill="#000" textLength="12" lengthAdjust="spacingAndGlyphs">123</text><path d="M1,10.5 L14,10.5 M1,12.5 L14,12.5 M3.5,9 L3.5,14 M7.5,9 L7.5,14 M11.5,9 L11.5,14" stroke="#000" stroke-width="1" fill="none"/></svg>
<div style="left:470px;top:668px;width:16px;height:16px;background:#000;"></div>
<div style="left:472px;top:675px;width:12px;height:2px;background:#FFF;"></div>
<svg style="position:absolute;left:270px;top:668px" width="16" height="16"><circle cx="8" cy="8" r="6.5" fill="#B8C4D8" stroke="#8C96A8" stroke-width="1"/><circle cx="8" cy="8" r="4.8" fill="#EEF4FC" stroke="#A8B8D0" stroke-width="0.8"/><path d="M8,4.5 L8,8 L10,9.5" stroke="#7890B8" stroke-width="1" fill="none"/></svg>
<div style="left:166px;top:710px;width:884px;height:1px;background:#ACA899;"></div>
<div style="left:131px;top:709px;width:32px;height:1px;background:#C7C4B5;"></div>
<div style="left:131px;top:710px;width:32px;height:1px;background:#FFFFFF;"></div>
<div class="t" style="left:170px;top:693px;color:#000;font-size:11px;">0</div>
<div class="t" style="left:271px;top:693px;color:#000;font-size:11px;">0</div>
<div class="t" style="left:371px;top:693px;color:#000;font-size:11px;">0</div>
<div class="t" style="left:471px;top:693px;color:#000;font-size:11px;">f</div>
<div class="t" style="left:571px;top:693px;color:#000;font-size:11px;">1</div>
<div class="t" style="left:671px;top:693px;color:#000;font-size:11px;">1</div>
<div class="t" style="left:771px;top:693px;color:#000;font-size:11px;">1</div>
<div class="t" style="left:871px;top:693px;color:#000;font-size:11px;">1</div>
<div class="t" style="left:971px;top:693px;color:#000;font-size:11px;">1</div>
<div style="left:166px;top:732px;width:884px;height:1px;background:#ACA899;"></div>
<div style="left:131px;top:731px;width:32px;height:1px;background:#C7C4B5;"></div>
<div style="left:131px;top:732px;width:32px;height:1px;background:#FFFFFF;"></div>
<div class="t" style="left:170px;top:715px;color:#000;font-size:11px;">1</div>
<div class="t" style="left:271px;top:715px;color:#000;font-size:11px;">64n</div>
<div class="t" style="left:371px;top:715px;color:#000;font-size:11px;">1</div>
<div class="t" style="left:471px;top:715px;color:#000;font-size:11px;">7</div>
<div class="t" style="left:571px;top:715px;color:#000;font-size:11px;">0</div>
<div class="t" style="left:671px;top:715px;color:#000;font-size:11px;">1</div>
<div class="t" style="left:771px;top:715px;color:#000;font-size:11px;">1</div>
<div class="t" style="left:871px;top:715px;color:#000;font-size:11px;">1</div>
<div class="t" style="left:971px;top:715px;color:#000;font-size:11px;">0</div>
<div style="left:166px;top:754px;width:884px;height:1px;background:#ACA899;"></div>
<div style="left:131px;top:753px;width:32px;height:1px;background:#C7C4B5;"></div>
<div style="left:131px;top:754px;width:32px;height:1px;background:#FFFFFF;"></div>
<div class="t" style="left:170px;top:737px;color:#000;font-size:11px;">2</div>
<div class="t" style="left:271px;top:737px;color:#000;font-size:11px;">128n</div>
<div class="t" style="left:371px;top:737px;color:#000;font-size:11px;">1</div>
<div class="t" style="left:471px;top:737px;color:#000;font-size:11px;">d</div>
<div class="t" style="left:571px;top:737px;color:#000;font-size:11px;">1</div>
<div class="t" style="left:671px;top:737px;color:#000;font-size:11px;">1</div>
<div class="t" style="left:771px;top:737px;color:#000;font-size:11px;">0</div>
<div class="t" style="left:871px;top:737px;color:#000;font-size:11px;">1</div>
<div class="t" style="left:971px;top:737px;color:#000;font-size:11px;">1</div>
<div style="left:166px;top:776px;width:884px;height:1px;background:#ACA899;"></div>
<div style="left:131px;top:775px;width:32px;height:1px;background:#C7C4B5;"></div>
<div style="left:131px;top:776px;width:32px;height:1px;background:#FFFFFF;"></div>
<div class="t" style="left:170px;top:759px;color:#000;font-size:11px;">3</div>
<div class="t" style="left:271px;top:759px;color:#000;font-size:11px;">192n</div>
<div class="t" style="left:371px;top:759px;color:#000;font-size:11px;">1</div>
<div class="t" style="left:471px;top:759px;color:#000;font-size:11px;">4</div>
<div class="t" style="left:571px;top:759px;color:#000;font-size:11px;">0</div>
<div class="t" style="left:671px;top:759px;color:#000;font-size:11px;">1</div>
<div class="t" style="left:771px;top:759px;color:#000;font-size:11px;">0</div>
<div class="t" style="left:871px;top:759px;color:#000;font-size:11px;">0</div>
<div class="t" style="left:971px;top:759px;color:#000;font-size:11px;">0</div>
<div style="left:166px;top:798px;width:884px;height:1px;background:#ACA899;"></div>
<div style="left:131px;top:797px;width:32px;height:1px;background:#C7C4B5;"></div>
<div style="left:131px;top:798px;width:32px;height:1px;background:#FFFFFF;"></div>
<div class="t" style="left:170px;top:781px;color:#000;font-size:11px;">4</div>
<div class="t" style="left:271px;top:781px;color:#000;font-size:11px;">256n</div>
<div class="t" style="left:371px;top:781px;color:#000;font-size:11px;">0</div>
<div class="t" style="left:471px;top:781px;color:#000;font-size:11px;">0</div>
<div class="t" style="left:571px;top:781px;color:#000;font-size:11px;">0</div>
<div class="t" style="left:671px;top:781px;color:#000;font-size:11px;">0</div>
<div class="t" style="left:771px;top:781px;color:#000;font-size:11px;">0</div>
<div class="t" style="left:871px;top:781px;color:#000;font-size:11px;">0</div>
<div class="t" style="left:971px;top:781px;color:#000;font-size:11px;">1</div>
<div style="left:166px;top:820px;width:884px;height:1px;background:#ACA899;"></div>
<div style="left:131px;top:819px;width:32px;height:1px;background:#C7C4B5;"></div>
<div style="left:131px;top:820px;width:32px;height:1px;background:#FFFFFF;"></div>
<div class="t" style="left:170px;top:803px;color:#000;font-size:11px;">5</div>
<div class="t" style="left:271px;top:803px;color:#000;font-size:11px;">320n</div>
<div class="t" style="left:371px;top:803px;color:#000;font-size:11px;">0</div>
<div class="t" style="left:471px;top:803px;color:#000;font-size:11px;">0</div>
<div class="t" style="left:571px;top:803px;color:#000;font-size:11px;">0</div>
<div class="t" style="left:671px;top:803px;color:#000;font-size:11px;">0</div>
<div class="t" style="left:771px;top:803px;color:#000;font-size:11px;">0</div>
<div class="t" style="left:871px;top:803px;color:#000;font-size:11px;">0</div>
<div class="t" style="left:971px;top:803px;color:#000;font-size:11px;">0</div>
<div style="left:166px;top:842px;width:884px;height:1px;background:#ACA899;"></div>
<div style="left:131px;top:841px;width:32px;height:1px;background:#C7C4B5;"></div>
<div style="left:131px;top:842px;width:32px;height:1px;background:#FFFFFF;"></div>
<div class="t" style="left:170px;top:825px;color:#000;font-size:11px;">6</div>
<div class="t" style="left:271px;top:825px;color:#000;font-size:11px;">384n</div>
<div class="t" style="left:371px;top:825px;color:#000;font-size:11px;">1</div>
<div class="t" style="left:471px;top:825px;color:#000;font-size:11px;">b</div>
<div class="t" style="left:571px;top:825px;color:#000;font-size:11px;">1</div>
<div class="t" style="left:671px;top:825px;color:#000;font-size:11px;">0</div>
<div class="t" style="left:771px;top:825px;color:#000;font-size:11px;">1</div>
<div class="t" style="left:871px;top:825px;color:#000;font-size:11px;">1</div>
<div class="t" style="left:971px;top:825px;color:#000;font-size:11px;">1</div>
<div style="left:166px;top:864px;width:884px;height:1px;background:#ACA899;"></div>
<div style="left:131px;top:863px;width:32px;height:1px;background:#C7C4B5;"></div>
<div style="left:131px;top:864px;width:32px;height:1px;background:#FFFFFF;"></div>
<div style="left:166px;top:689px;width:1px;height:158px;background:#ACA899;"></div>
<div style="left:266px;top:689px;width:1px;height:158px;background:#ACA899;"></div>
<div style="left:366px;top:689px;width:1px;height:158px;background:#ACA899;"></div>
<div style="left:466px;top:689px;width:1px;height:158px;background:#ACA899;"></div>
<div style="left:566px;top:689px;width:1px;height:158px;background:#ACA899;"></div>
<div style="left:666px;top:689px;width:1px;height:158px;background:#ACA899;"></div>
<div style="left:766px;top:689px;width:1px;height:158px;background:#ACA899;"></div>
<div style="left:866px;top:689px;width:1px;height:158px;background:#ACA899;"></div>
<div style="left:966px;top:689px;width:1px;height:158px;background:#ACA899;"></div>
<div style="left:163px;top:689px;width:3px;height:158px;background:linear-gradient(to right,#E2DFD0,#D0CDBE);"></div>
<svg style="position:absolute;left:131px;top:694px" width="6" height="10"><path d="M0,0 L5,5 L0,10 Z" fill="#000"/></svg>
<div class="sbtrack" style="left:1049px;top:664px;width:16px;height:183px"></div>
<div class="sbbtn" style="left:1049px;top:664px;width:16px;height:17px"></div>
<svg style="position:absolute;left:1049px;top:664px" width="16" height="17"><path d="M4,10 L8,6 L12,10" stroke="#4D6185" stroke-width="2" fill="none"/></svg>
<div class="sbthumb" style="left:1049px;top:682px;width:16px;height:7px"></div>
<div class="sbbtn" style="left:1049px;top:830px;width:16px;height:17px"></div>
<svg style="position:absolute;left:1049px;top:830px" width="16" height="17"><path d="M4,6.5 L8,10.5 L12,6.5" stroke="#4D6185" stroke-width="2" fill="none"/></svg>
<div class="sbtrack" style="left:126px;top:847px;width:923px;height:16px"></div>
<div class="sbbtn" style="left:126px;top:848px;width:16px;height:15px"></div>
<svg style="position:absolute;left:126px;top:848px" width="16" height="15"><path d="M9.5,3.5 L5.5,7.5 L9.5,11.5" stroke="#4D6185" stroke-width="2" fill="none"/></svg>
<div class="sbthumb" style="left:144px;top:848px;width:780px;height:14px"></div>
<div class="sbbtn" style="left:1032px;top:848px;width:16px;height:15px"></div>
<svg style="position:absolute;left:1032px;top:848px" width="16" height="15"><path d="M6.5,3.5 L10.5,7.5 L6.5,11.5" stroke="#4D6185" stroke-width="2" fill="none"/></svg>
<svg style="position:absolute;left:528px;top:851px" width="12" height="8"><path d="M2.5,0 L2.5,7 M4.5,0 L4.5,7 M6.5,0 L6.5,7 M8.5,0 L8.5,7" stroke="#FFFFFF" stroke-width="1"/><path d="M3.5,1 L3.5,8 M5.5,1 L5.5,8 M7.5,1 L7.5,8 M9.5,1 L9.5,8" stroke="#8CB0F0" stroke-width="1"/></svg>
<div style="left:1049px;top:847px;width:16px;height:16px;background:#ECE9D8;"></div>
<div style="left:126px;top:863px;width:939px;height:1px;background:#FFFFFF;"></div>
<div style="left:125px;top:864px;width:941px;height:1px;background:#000;"></div>
<div style="left:1065px;top:663px;width:2px;height:202px;background:#000;"></div>
</div></body></html>
